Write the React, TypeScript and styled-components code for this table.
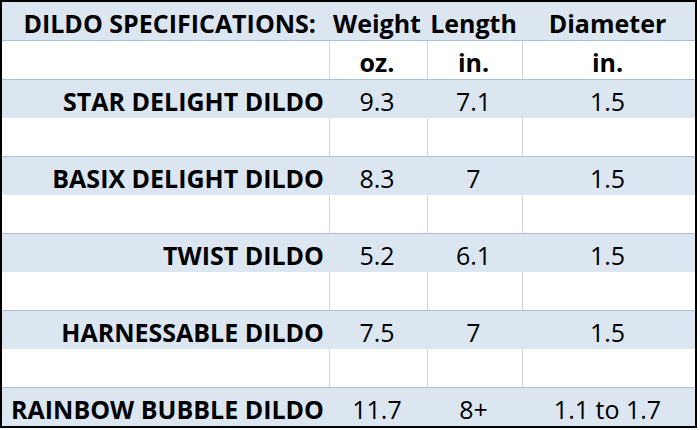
import styled, { createGlobalStyle } from "styled-components";

type Spec = {
  name: string;
  weight: string;
  length: string;
  diameter: string;
};

const specs: Spec[] = [
  { name: "STAR DELIGHT DILDO", weight: "9.3", length: "7.1", diameter: "1.5" },
  { name: "BASIX DELIGHT DILDO", weight: "8.3", length: "7", diameter: "1.5" },
  { name: "TWIST DILDO", weight: "5.2", length: "6.1", diameter: "1.5" },
  { name: "HARNESSABLE DILDO", weight: "7.5", length: "7", diameter: "1.5" },
  { name: "RAINBOW BUBBLE DILDO", weight: "11.7", length: "8+", diameter: "1.1 to 1.7" },
];

const colors = {
  shade: "#dce6f1",
  shadeLine: "#a9c0dc",
  grid: "#d4d4d4",
  text: "#000000",
};

export default function App() {
  return (
    <>
      <GlobalStyle />
      <Sheet>
        <Row $shaded>
          <Cell $bold $align="right" $pad={13}>DILDO SPECIFICATIONS:</Cell>
          <Cell $bold>Weight</Cell>
          <Cell $bold>Length</Cell>
          <Cell $bold>Diameter</Cell>
        </Row>
        <Row>
          <Cell />
          <Cell $bold>oz.</Cell>
          <Cell $bold>in.</Cell>
          <Cell $bold>in.</Cell>
        </Row>
        {specs.map((s, i) => (
          <Group key={s.name}>
            {i > 0 && (
              <Row>
                <Cell />
                <Cell />
                <Cell />
                <Cell />
              </Row>
            )}
            <Row $shaded>
              <Cell $bold $align="right">{s.name}</Cell>
              <Cell>{s.weight}</Cell>
              <Cell>{s.length}</Cell>
              <Cell>{s.diameter}</Cell>
            </Row>
          </Group>
        ))}
      </Sheet>
    </>
  );
}

const GlobalStyle = createGlobalStyle`
  html, body {
    margin: 0;
    padding: 0;
    background: #ffffff;
  }
  body {
    font-family: "Open Sans", "Liberation Sans", sans-serif;
    color: ${colors.text};
  }
`;

const Sheet = styled.div`
  width: 693px;
  height: 424px;
  border: 2px solid #000;
  display: flex;
  flex-direction: column;
`;

const Group = styled.div`
  display: contents;
`;

const Row = styled.div<{ $shaded?: boolean }>`
  flex: 1;
  display: grid;
  grid-template-columns: 328px 98px 95px 172px;
  background: ${({ $shaded }) => ($shaded ? colors.shade : "#ffffff")};
  border-bottom: 1px solid ${colors.shadeLine};

  &:last-child {
    border-bottom: none;
  }

  & > div:not(:last-child) {
    border-right: 1px solid ${({ $shaded }) => ($shaded ? "transparent" : colors.grid)};
  }
`;

const Cell = styled.div<{ $bold?: boolean; $align?: "right" | "center"; $pad?: number }>`
  display: flex;
  align-items: center;
  justify-content: ${({ $align }) => ($align === "right" ? "flex-end" : "center")};
  padding: 3px ${({ $pad }) => $pad ?? 5}px 0 2px;
  font-size: 25px;
  font-weight: ${({ $bold }) => ($bold ? 700 : 400)};
  white-space: nowrap;
  overflow: hidden;
`;
